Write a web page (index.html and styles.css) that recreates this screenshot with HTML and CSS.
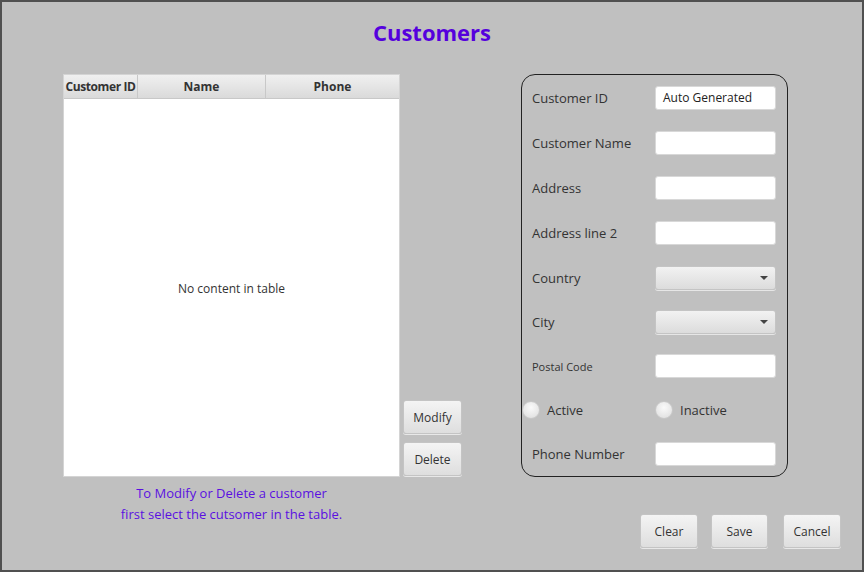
FILE: index.html
```html
<!DOCTYPE html>
<html>
<head>
<meta charset="utf-8">
<link rel="stylesheet" href="styles.css">
</head>
<body>
<div class="window">
  <h1 class="title">Customers</h1>
  <div class="main">
    <div class="left">
      <div class="table-row">
        <div class="table">
          <div class="thead">
            <div class="th c1">Customer ID</div>
            <div class="th c2">Name</div>
            <div class="th c3">Phone</div>
          </div>
          <div class="tbody">No content in table</div>
        </div>
        <div class="side-buttons">
          <button class="btn small">Modify</button>
          <button class="btn small">Delete</button>
        </div>
      </div>
      <p class="hint">To Modify or Delete a customer<br>first select the cutsomer in the table.</p>
    </div>
    <div class="right">
      <div class="form">
        <div class="row"><span class="lbl">Customer ID</span><div class="field">Auto Generated</div></div>
        <div class="row"><span class="lbl">Customer Name</span><div class="field"></div></div>
        <div class="row"><span class="lbl">Address</span><div class="field"></div></div>
        <div class="row"><span class="lbl">Address line 2</span><div class="field"></div></div>
        <div class="row"><span class="lbl">Country</span><div class="combo"><span class="arrow"></span></div></div>
        <div class="row"><span class="lbl">City</span><div class="combo"><span class="arrow"></span></div></div>
        <div class="row"><span class="lbl lbl-small">Postal Code</span><div class="field"></div></div>
        <div class="row radios">
          <label class="radio"><span class="dot"></span>Active</label>
          <label class="radio"><span class="dot"></span>Inactive</label>
        </div>
        <div class="row"><span class="lbl">Phone Number</span><div class="field"></div></div>
      </div>
      <div class="actions">
        <button class="btn big">Clear</button>
        <button class="btn big save">Save</button>
        <button class="btn big">Cancel</button>
      </div>
    </div>
  </div>
</div>
</body>
</html>
```
FILE: styles.css
```css
* { box-sizing: border-box; }
html, body { margin: 0; padding: 0; }
body {
  width: 864px;
  height: 572px;
  font-family: "Open Sans", "Noto Sans", sans-serif;
  color: #333;
}
.window {
  width: 864px;
  height: 572px;
  background: #c0c0c0;
  border: 2px solid #505050;
  display: flex;
  flex-direction: column;
}
.title {
  margin: 15px 0 0 0;
  height: 30px;
  line-height: 30px;
  text-align: center;
  font-size: 22px;
  font-weight: 700;
  color: #5500dd;
}
.main {
  display: flex;
  padding: 27px 0 0 61px;
}
.left { width: 400px; display: flex; flex-direction: column; }
.table-row { display: flex; align-items: flex-end; }
.table {
  width: 337px;
  height: 403px;
  border: 1px solid #d4d4d4;
  background: #fff;
  display: flex;
  flex-direction: column;
}
.thead {
  display: flex;
  height: 24px;
  background: linear-gradient(#f0f0f0, #dadada);
  border-bottom: 1px solid #c8c8c8;
}
.th {
  font-size: 12px;
  font-weight: 700;
  color: #333;
  line-height: 23px;
  text-align: center;
  border-right: 1px solid #c8c8c8;
  white-space: nowrap;
}
.c1 { width: 74px; letter-spacing: -0.4px; }
.c2 { width: 128px; }
.c3 { flex: 1; border-right: none; }
.tbody {
  flex: 1;
  display: flex;
  align-items: center;
  justify-content: center;
  font-size: 12px;
  color: #333;
  padding-top: 1px;
}
.side-buttons {
  display: flex;
  flex-direction: column;
  gap: 8px;
  margin-left: 3px;
  margin-bottom: 1px;
}
.btn {
  font-family: "Open Sans", "Noto Sans", sans-serif;
  font-size: 12px;
  color: #333;
  background: linear-gradient(#f4f4f4, #dedede);
  border: 1px solid #c4c4c4;
  border-radius: 3px;
  box-shadow: 0 1px 0 #e8e8e8;
  padding: 0;
}
.btn.small { width: 59px; height: 34px; }
.btn.big { width: 58px; height: 34px; }
.btn.big.save { width: 57px; }
.hint {
  margin: 6px 0 0 0;
  width: 337px;
  text-align: center;
  font-size: 13px;
  line-height: 21px;
  color: #5a10e0;
}
.right {
  margin-left: 58px;
  display: flex;
  flex-direction: column;
}
.form {
  width: 267px;
  height: 403px;
  border: 1px solid #222;
  border-radius: 14px;
  padding: 11px 11px 0 0;
  display: flex;
  flex-direction: column;
  gap: 21px;
}
.row {
  display: flex;
  align-items: center;
  justify-content: space-between;
  height: 24px;
  padding-left: 10px;
}
.row:nth-child(n+6) { margin-top: -1px; }
.lbl { font-size: 13px; color: #333; }
.lbl-small { font-size: 11px; }
.field {
  width: 121px;
  height: 24px;
  background: #fff;
  border: 1px solid #d8d8d8;
  border-radius: 3px;
  font-size: 12px;
  line-height: 22px;
  padding-left: 7px;
  color: #222;
}
.combo {
  width: 121px;
  height: 24px;
  border: 1px solid #c4c4c4;
  border-radius: 3px;
  background: linear-gradient(#f2f2f2, #dcdcdc);
  box-shadow: 0 1px 0 #e6e6e6;
  display: flex;
  justify-content: flex-end;
  align-items: center;
  padding-right: 7px;
}
.arrow {
  width: 0;
  height: 0;
  border-left: 4px solid transparent;
  border-right: 4px solid transparent;
  border-top: 4px solid #444;
}
.radios { padding-left: 0; justify-content: flex-start; }
.radio {
  display: flex;
  align-items: center;
  font-size: 13px;
  color: #333;
}
.radio:first-child { width: 133px; }
.dot {
  width: 18px;
  height: 18px;
  border-radius: 50%;
  background: radial-gradient(circle at 50% 35%, #fafafa, #dcdcdc);
  border: 1px solid #c8c8c8;
  margin-right: 7px;
}
.actions {
  display: flex;
  justify-content: flex-end;
  gap: 13px;
  margin-top: 37px;
  margin-right: -53px;
}
.actions .btn:nth-child(3) { margin-left: 2px; }
```
